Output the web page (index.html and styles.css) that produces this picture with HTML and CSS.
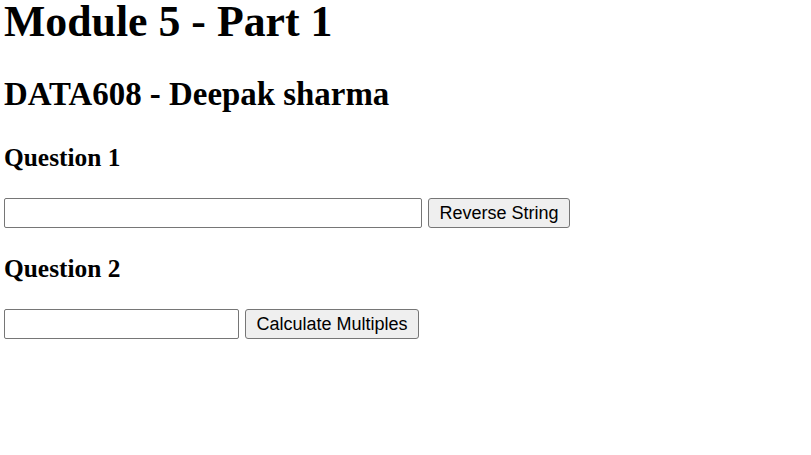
FILE: index.html
```html
<!DOCTYPE html>
<html lang="en">
<head>
<meta charset="utf-8">
<title>Module 5 - Part 1</title>
<link rel="stylesheet" href="styles.css">
</head>
<body>
<h1 class="title">Module 5 - Part 1</h1>
<h2 class="subtitle">DATA608 - Deepak sharma</h2>
<section class="question">
  <h3 class="question-title">Question 1</h3>
  <div class="row">
    <input class="field field-wide" type="text">
    <button class="btn" type="button">Reverse String</button>
  </div>
</section>
<section class="question">
  <h3 class="question-title">Question 2</h3>
  <div class="row">
    <input class="field field-narrow" type="text">
    <button class="btn" type="button">Calculate Multiples</button>
  </div>
</section>
</body>
</html>
```
FILE: styles.css
```css
html, body {
  background: #ffffff;
}
body {
  margin: 0 4px;
  font-family: "Liberation Serif", "Times New Roman", serif;
  color: #000000;
}
.title {
  margin: 0 0 32px;
  font-size: 43.8px;
  line-height: 43px;
  font-weight: bold;
}
.subtitle {
  margin: 0 0 29px;
  font-size: 32.9px;
  line-height: 38px;
  font-weight: bold;
}
.question-title {
  margin: 24.5px 0 26.3px;
  font-size: 25.4px;
  line-height: 30px;
  font-weight: bold;
}
.question:first-of-type .question-title {
  margin-top: 0;
}
.row {
  display: flex;
  gap: 6px;
  align-items: stretch;
}
.field {
  box-sizing: border-box;
  height: 30px;
  margin: 0;
  padding: 2px 4px;
  border: 1px solid #767676;
  border-radius: 2px;
  background: #ffffff;
  font-family: "Liberation Sans", Arial, sans-serif;
  font-size: 18px;
}
.field-wide {
  width: 418px;
}
.field-narrow {
  width: 235px;
}
.btn {
  box-sizing: border-box;
  height: 30px;
  margin: 0;
  padding: 0 10.5px;
  border: 1px solid #767676;
  border-radius: 3px;
  background: #efefef;
  color: #000000;
  font-family: "Liberation Sans", Arial, sans-serif;
  font-size: 18px;
  line-height: 28px;
}
```
